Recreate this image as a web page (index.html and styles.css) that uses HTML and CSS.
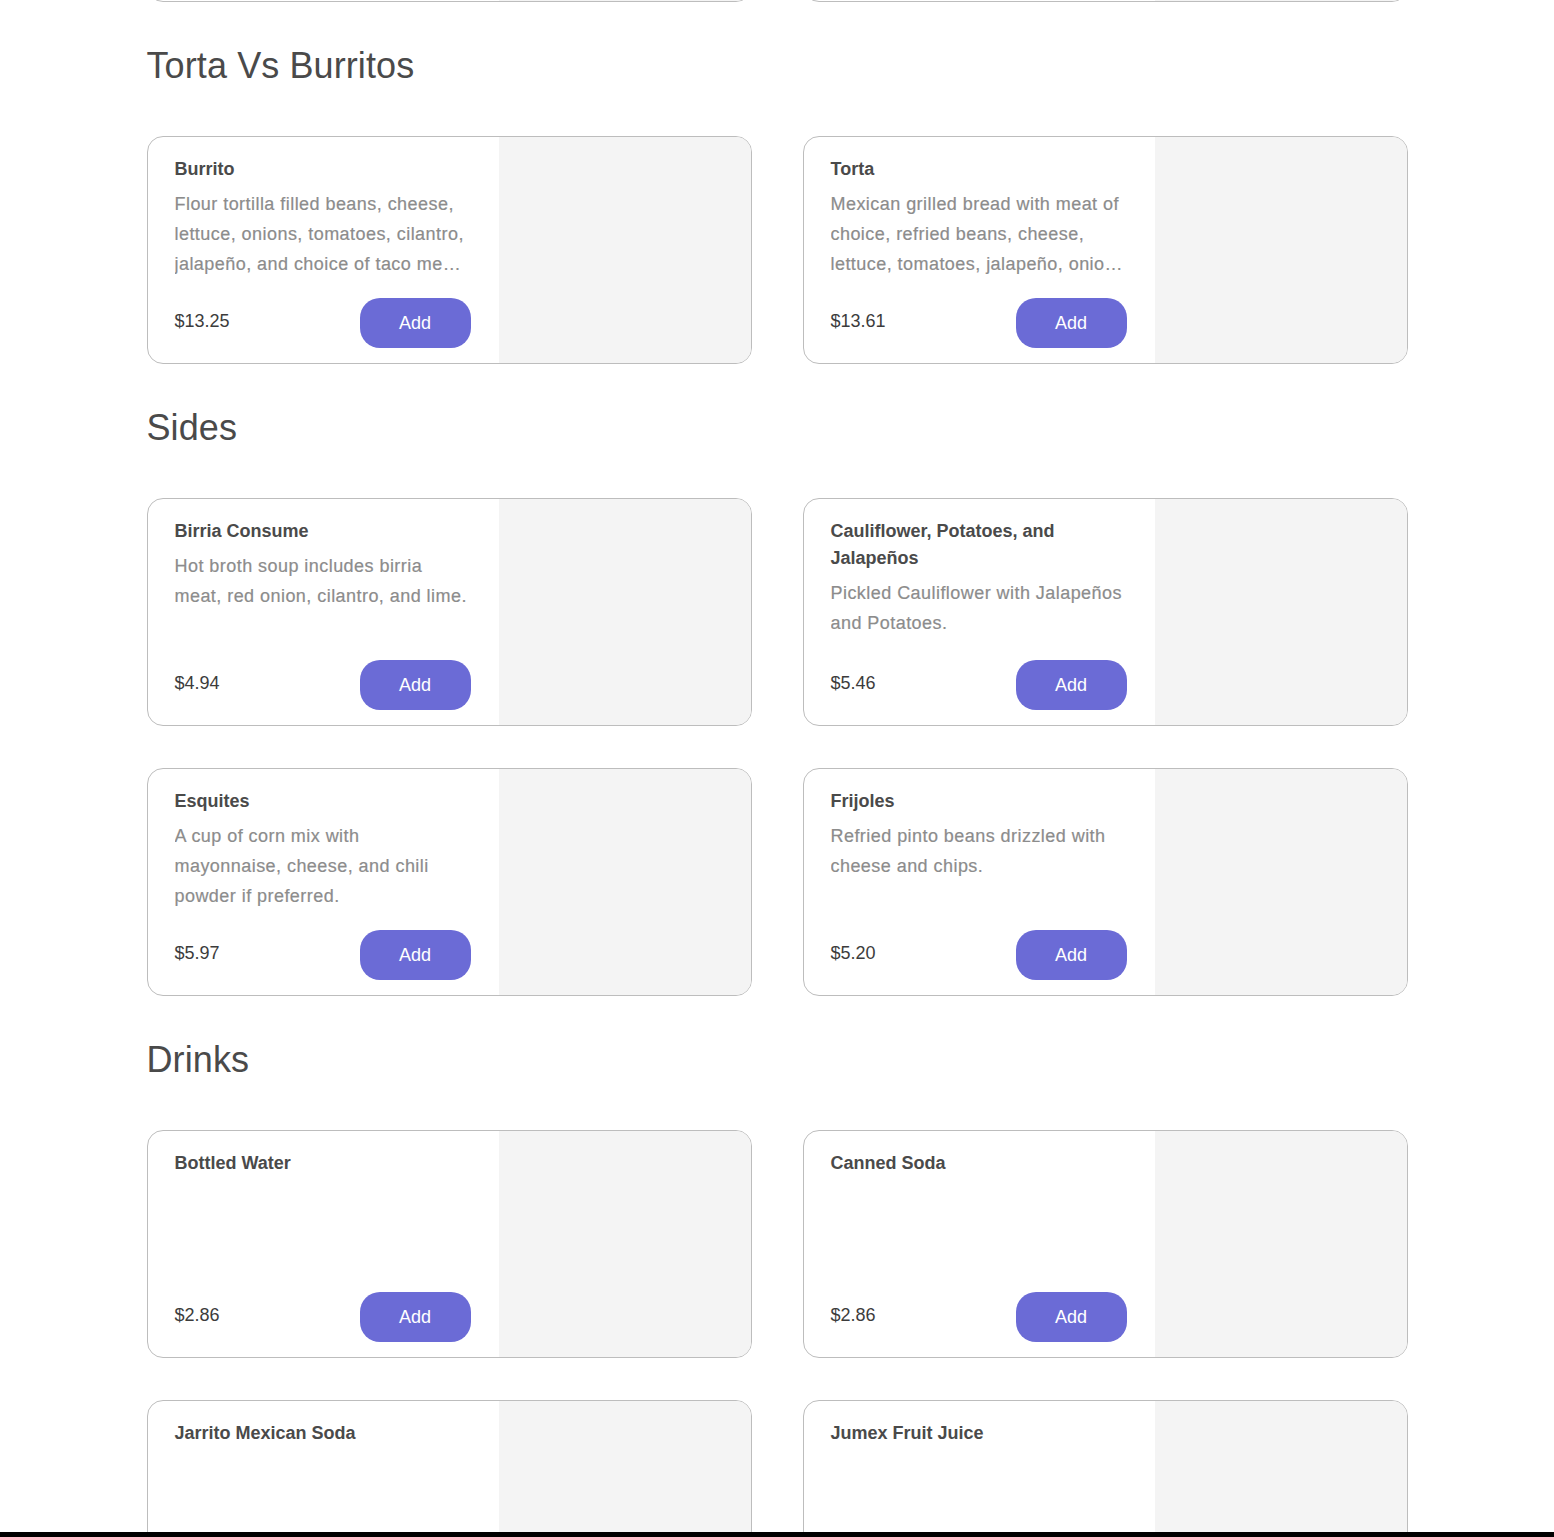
FILE: index.html
```html
<!DOCTYPE html>
<html lang="en">
    <head>
        <meta charset="UTF-8" />
        <meta name="viewport" content="width=device-width, initial-scale=1.0" />
        <title>Menu</title>
        <link rel="stylesheet" href="styles.css">
    </head>
    <body>
        <main class="menu">
            <!-- 이전 섹션 (위로 스크롤되어 아랫단만 보임) -->
            <section class="cat cat-prev">
                <div class="grid">
                    <div class="item">
                        <div class="info">
                            <h3 class="name">Quesadilla</h3>
                            <p class="desc">Flour tortilla with melted cheese and choice of meat.</p>
                            <div class="foot">
                                <span class="price">$11.50</span>
                                <button class="add">Add</button>
                            </div>
                        </div>
                        <div class="pic"></div>
                    </div>
                    <div class="item">
                        <div class="info">
                            <h3 class="name">Nachos</h3>
                            <p class="desc">Tortilla chips topped with beans, cheese and jalapeño.</p>
                            <div class="foot">
                                <span class="price">$10.95</span>
                                <button class="add">Add</button>
                            </div>
                        </div>
                        <div class="pic"></div>
                    </div>
                </div>
            </section>

            <section class="cat">
                <h2 class="cat-tit">Torta Vs Burritos</h2>
                <div class="grid">
                    <div class="item">
                        <div class="info">
                            <h3 class="name">Burrito</h3>
                            <p class="desc">Flour tortilla filled beans, cheese, lettuce, onions, tomatoes, cilantro, jalapeño, and choice of taco meat, wrapped and grilled.</p>
                            <div class="foot">
                                <span class="price">$13.25</span>
                                <button class="add">Add</button>
                            </div>
                        </div>
                        <div class="pic"></div>
                    </div>
                    <div class="item">
                        <div class="info">
                            <h3 class="name">Torta</h3>
                            <p class="desc">Mexican grilled bread with meat of choice, refried beans, cheese, lettuce, tomatoes, jalapeño, onions and avocado.</p>
                            <div class="foot">
                                <span class="price">$13.61</span>
                                <button class="add">Add</button>
                            </div>
                        </div>
                        <div class="pic"></div>
                    </div>
                </div>
            </section>

            <section class="cat">
                <h2 class="cat-tit">Sides</h2>
                <div class="grid">
                    <div class="item">
                        <div class="info">
                            <h3 class="name">Birria Consume</h3>
                            <p class="desc">Hot broth soup includes birria meat, red onion, cilantro, and lime.</p>
                            <div class="foot">
                                <span class="price">$4.94</span>
                                <button class="add">Add</button>
                            </div>
                        </div>
                        <div class="pic"></div>
                    </div>
                    <div class="item">
                        <div class="info">
                            <h3 class="name">Cauliflower, Potatoes, and Jalapeños</h3>
                            <p class="desc">Pickled Cauliflower with Jalapeños and Potatoes.</p>
                            <div class="foot">
                                <span class="price">$5.46</span>
                                <button class="add">Add</button>
                            </div>
                        </div>
                        <div class="pic"></div>
                    </div>
                    <div class="item">
                        <div class="info">
                            <h3 class="name">Esquites</h3>
                            <p class="desc">A cup of corn mix with mayonnaise, cheese, and chili powder if preferred.</p>
                            <div class="foot">
                                <span class="price">$5.97</span>
                                <button class="add">Add</button>
                            </div>
                        </div>
                        <div class="pic"></div>
                    </div>
                    <div class="item">
                        <div class="info">
                            <h3 class="name">Frijoles</h3>
                            <p class="desc">Refried pinto beans drizzled with cheese and chips.</p>
                            <div class="foot">
                                <span class="price">$5.20</span>
                                <button class="add">Add</button>
                            </div>
                        </div>
                        <div class="pic"></div>
                    </div>
                </div>
            </section>

            <section class="cat">
                <h2 class="cat-tit">Drinks</h2>
                <div class="grid">
                    <div class="item">
                        <div class="info">
                            <h3 class="name">Bottled Water</h3>
                            <div class="foot">
                                <span class="price">$2.86</span>
                                <button class="add">Add</button>
                            </div>
                        </div>
                        <div class="pic"></div>
                    </div>
                    <div class="item">
                        <div class="info">
                            <h3 class="name">Canned Soda</h3>
                            <div class="foot">
                                <span class="price">$2.86</span>
                                <button class="add">Add</button>
                            </div>
                        </div>
                        <div class="pic"></div>
                    </div>
                    <div class="item">
                        <div class="info">
                            <h3 class="name">Jarrito Mexican Soda</h3>
                            <div class="foot">
                                <span class="price">$3.25</span>
                                <button class="add">Add</button>
                            </div>
                        </div>
                        <div class="pic"></div>
                    </div>
                    <div class="item">
                        <div class="info">
                            <h3 class="name">Jumex Fruit Juice</h3>
                            <div class="foot">
                                <span class="price">$3.25</span>
                                <button class="add">Add</button>
                            </div>
                        </div>
                        <div class="pic"></div>
                    </div>
                </div>
            </section>
        </main>

        <!-- 하단 고정바 -->
        <div class="bottom-bar"></div>
    </body>
</html>
```

FILE: styles.css
```css
html,
body {
    margin: 0;
    padding: 0;
}
body {
    font-family: "Liberation Sans", Arial, Helvetica, sans-serif;
    color: #4a4a4a;
    background: #fff;
    overflow: hidden;
}

/* 전체 메뉴 영역 */
.menu {
    width: 1261px;
    margin: 0 auto;
    padding-bottom: 200px;
}

/* 이전 섹션은 아랫선만 화면 위에 걸침 */
.cat-prev {
    margin-top: -226px;
}

/* 카테고리 제목 */
.cat-tit {
    margin: 42px 0 49px;
    font-size: 36px;
    font-weight: normal;
    line-height: 43px;
    letter-spacing: 0.1px;
    color: #4a4a4a;
}

/* 카드 2열 */
.grid {
    display: grid;
    grid-template-columns: 1fr 1fr;
    column-gap: 51px;
    row-gap: 42px;
}

/* 카드 */
.item {
    display: grid;
    grid-template-columns: 1fr 252px;
    height: 228px;
    box-sizing: border-box;
    border: 1px solid #bdbdbd;
    border-radius: 16px;
    overflow: hidden;
    background: #fff;
}
.info {
    display: flex;
    flex-direction: column;
    min-width: 0;
    padding: 19px 28px 15px 27px;
}
.name {
    margin: 0;
    font-size: 18px;
    font-weight: bold;
    line-height: 27px;
    color: #4a4a4a;
}
.desc {
    margin: 6px 0 0;
    font-size: 18px;
    line-height: 30px;
    letter-spacing: 0.45px;
    color: #8c8c8c;
    -webkit-text-stroke: 0.2px #8c8c8c;
    /* 3줄 말줄임 */
    display: -webkit-box;
    -webkit-line-clamp: 3;
    -webkit-box-orient: vertical;
    overflow: hidden;
}
.foot {
    display: flex;
    justify-content: space-between;
    align-items: center;
    margin-top: auto;
}
.price {
    margin-top: -3px;
    font-size: 18px;
    color: #3c3c3c;
}
.add {
    width: 111px;
    height: 50px;
    border: 0;
    border-radius: 20px;
    background: #6b6bd6;
    color: #fff;
    font-family: inherit;
    font-size: 18px;
    font-weight: 300;
    cursor: pointer;
}
.pic {
    background: #f4f4f4;
}

/* 하단 고정바 */
.bottom-bar {
    position: fixed;
    left: 0;
    right: 0;
    bottom: 0;
    height: 5px;
    background: #000;
}
```
